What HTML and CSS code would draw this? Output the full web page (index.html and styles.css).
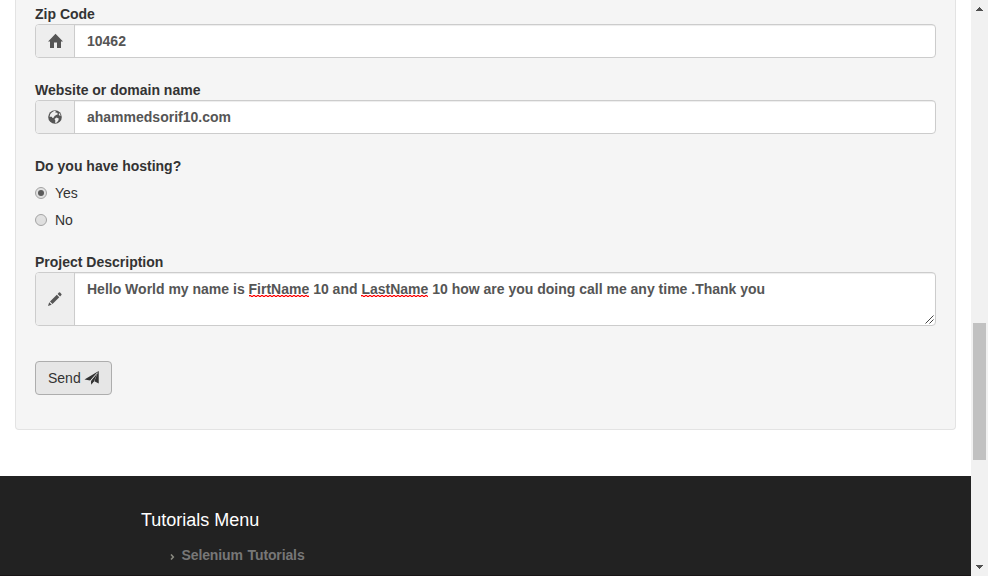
FILE: index.html
```html
<!DOCTYPE html>
<html lang="en">
<head>
<meta charset="utf-8">
<title>Input Form</title>
<link rel="stylesheet" href="styles.css">
</head>
<body>
<svg class="defs" width="0" height="0">
  <pattern id="wave" width="4" height="3" patternUnits="userSpaceOnUse">
    <path d="M0 0h2v1h-2zM2 1h2v1h-2z" fill="#f00"/>
    <path d="M0 1h2v1h-2zM2 0h2v1h-2z" fill="#f00" opacity=".35"/>
  </pattern>
</svg>
<div class="page">
  <form class="well">
    <div class="group">
      <label class="label">Zip Code</label>
      <div class="input-group">
        <span class="addon"><svg width="16" height="16" viewBox="0 0 16 16"><path d="M8.500.7l7.500 7.800h-2V15h-4V9.500H7V15H3V8.500H1L4 5.400z" fill="#555"/></svg></span>
        <div class="control">10462</div>
      </div>
    </div>
    <div class="group">
      <label class="label">Website or domain name</label>
      <div class="input-group">
        <span class="addon"><svg width="16" height="16" viewBox="0 0 16 16"><circle cx="8" cy="8" r="6.800" fill="#555"/><path d="M5 3.200l2.500-1.500 1.300.3-.5 1.600 2 .2.500 1.400-1.600.8-1.700 1-.6 1.600-1.500.3-.7-1.200-2.200.1.800-2.700zM9.500 8.500l2.200 1-.2 1.800-1.600 2.200-1.800.6.2-2.600-.8-1.600zM12.300 4l1.500 2.500-1.200.3-.9-1.500z" fill="#eee"/></svg></span>
        <div class="control">ahammedsorif10.com</div>
      </div>
    </div>
    <div class="group">
      <label class="label">Do you have hosting?</label>
      <div class="radio"><span class="dot checked"></span><span>Yes</span></div>
      <div class="radio"><span class="dot"></span><span>No</span></div>
    </div>
    <div class="group">
      <label class="label">Project Description</label>
      <div class="input-group tall">
        <span class="addon"><svg width="16" height="16" viewBox="0 0 16 16"><path d="M1 15l1.200-3.700 2.500 2.500zM3 10.500l6.800-6.800 2.500 2.500L5.500 13zM10.600 2.900l1.300-1.300q.6-.5 1.200 0l1.300 1.300q.5.600 0 1.200l-1.300 1.300z" fill="#555"/></svg></span>
        <div class="control">Hello World my name is <span class="misspelt">FirtName<svg class="squiggle"><rect width="100%" height="3" fill="url(#wave)"/></svg></span> 10 and <span class="misspelt">LastName<svg class="squiggle"><rect width="100%" height="3" fill="url(#wave)"/></svg></span> 10 how are you doing call me any time .Thank you<svg class="grip" width="9" height="9" viewBox="0 0 9 9"><path d="M.5 8.500l8-8M4.500 8.500l4-4" stroke="#444" stroke-width="1" fill="none"/></svg></div>
      </div>
    </div>
    <button type="button" class="send">Send <svg width="16" height="16" viewBox="0 0 16 16"><path d="M15.400.6v13.200l-4.600-2.300L14.600 2 6.500 10.600.5 9.600zM7.300 11.200l2.700.8-2.400 3z" fill="#333"/><path d="M14.500 2L7.500 11l.2 3 2.800-2.700z" fill="#333"/><path d="M14 2.500L6.800 10.800" stroke="#e6e6e6" stroke-width=".8"/></svg></button>
  </form>
  <footer class="footer">
    <h4 class="footer-title">Tutorials Menu</h4>
    <ul class="menu">
      <li><svg width="5" height="6" viewBox="0 0 5 6"><path d="M1 .5L3.300 3 1 5.500" fill="none" stroke="#8a8a80" stroke-width="1.600"/></svg><a>Selenium Tutorials</a></li>
    </ul>
  </footer>
</div>
<div class="scrollbar">
  <svg class="arrow" width="7" height="4" viewBox="0 0 7 4" shape-rendering="crispEdges"><path d="M3 0h1v1h1v1h1v1h1v1H0V3h1V2h1V1h1z" fill="#505050"/></svg>
  <div class="thumb"></div>
  <svg class="arrow" width="7" height="4" viewBox="0 0 7 4" shape-rendering="crispEdges"><path d="M0 0h7v1H6v1H5v1H4v1H3V3H2V2H1V1H0z" fill="#505050"/></svg>
</div>
</body>
</html>
```
FILE: styles.css
```css
* { box-sizing: border-box; }
body {
  margin: 0;
  height: 576px;
  display: flex;
  overflow: hidden;
  background: #fff;
  color: #333;
  font: 14px/20px "Liberation Sans", Arial, sans-serif;
}
.defs { position: absolute; }
.page { width: 971px; height: 576px; overflow: hidden; }
.well {
  width: 941px;
  height: 430px;
  margin: 0 15px 46px;
  padding: 4px 19px 0;
  background: #f5f5f5;
  border: 1px solid #e3e3e3;
  border-top: 0;
  border-radius: 0 0 4px 4px;
}
.group { margin-bottom: 22px; }
.label { display: block; font-weight: bold; }
.input-group {
  display: flex;
  height: 34px;
  border: 1px solid #ccc;
  border-radius: 4px;
  background: #fff;
  overflow: hidden;
}
.input-group.tall { height: 54px; }
.addon {
  width: 39px;
  display: flex;
  align-items: center;
  justify-content: center;
  background: #eee;
  border-right: 1px solid #ccc;
}
.control {
  position: relative;
  flex: 1;
  padding: 6px 12px;
  color: #555;
  font-weight: bold;
  white-space: nowrap;
  box-shadow: inset 0 1px 1px rgba(0,0,0,.075);
}
.misspelt { position: relative; }
.squiggle { position: absolute; left: 0; top: 14px; width: 100%; height: 3px; }
.grip { position: absolute; right: 1px; bottom: 1px; }
.radio { display: flex; align-items: center; gap: 8px; height: 20px; margin-top: 7px; }
.dot {
  width: 12px;
  height: 12px;
  display: flex;
  align-items: center;
  justify-content: center;
  border: 1px solid #a3a3a3;
  border-radius: 50%;
  background: linear-gradient(#e2e2e2, #dedede);
}
.checked::after { content: ""; width: 6px; height: 6px; border-radius: 50%; background: #5a5a5a; }
.send {
  display: flex;
  align-items: center;
  gap: 3px;
  width: 77px;
  height: 34px;
  margin-top: 35px;
  padding: 0 12px;
  font: 14px/20px "Liberation Sans", Arial, sans-serif;
  color: #333;
  background: #e6e6e6;
  border: 1px solid #adadad;
  border-radius: 4px;
}
.footer { height: 100px; padding: 34px 0 0 141px; background: #222; border-bottom: 1px solid #191516; }
.footer-title { margin: 0; font-size: 18px; font-weight: normal; color: #fff; }
.menu { list-style: none; margin: 15px 0 0; padding: 0 0 0 28.500px; }
.menu li { display: flex; align-items: center; gap: 7px; color: #777; font-weight: bold; letter-spacing: -.12px; word-spacing: 1px; }
.menu svg { margin-top: 4px; }
.scrollbar {
  width: 17px;
  height: 576px;
  display: flex;
  flex-direction: column;
  align-items: center;
  justify-content: space-between;
  padding: 7px 0;
  background: #f1f1f1;
}
.thumb { width: 13px; height: 137px; margin-top: 207px; background: #c1c1c1; }
```
